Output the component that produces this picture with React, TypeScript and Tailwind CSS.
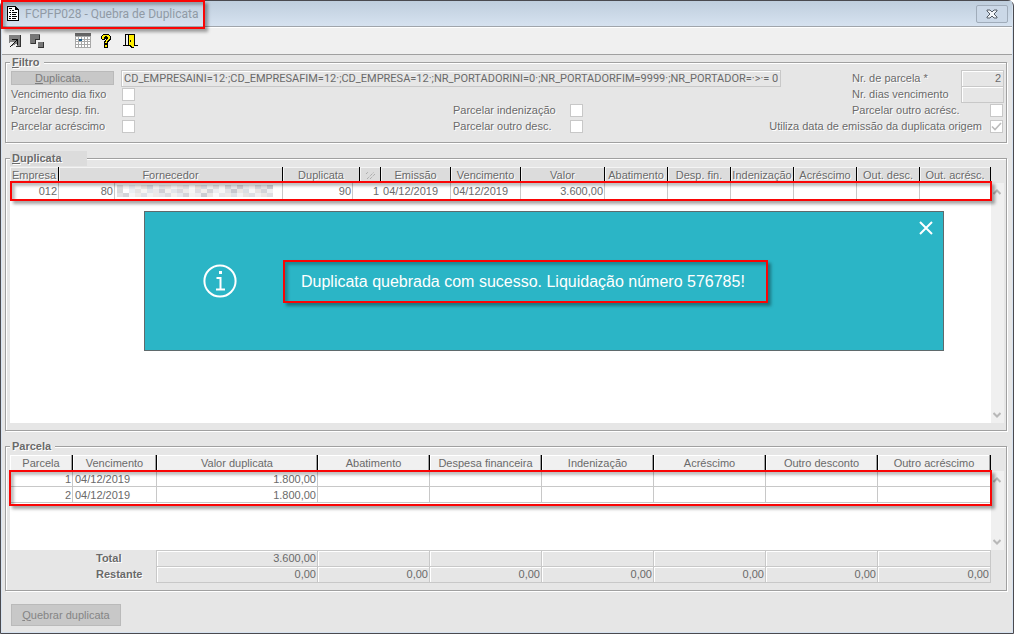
import React from 'react';

const INVOICE_COLS = [
  { label: 'Empresa', span: 1 },
  { label: 'Fornecedor', span: 2 },
  { label: 'Duplicata', span: 2 },
  { label: '', span: 1 },
  { label: 'Emissão', span: 1 },
  { label: 'Vencimento', span: 1 },
  { label: 'Valor', span: 1 },
  { label: 'Abatimento', span: 1 },
  { label: 'Desp. fin.', span: 1 },
  { label: 'Indenização', span: 1 },
  { label: 'Acréscimo', span: 1 },
  { label: 'Out. desc.', span: 1 },
  { label: 'Out. acrésc.', span: 1 },
];

const PARCEL_COLS = [
  'Parcela',
  'Vencimento',
  'Valor duplicata',
  'Abatimento',
  'Despesa financeira',
  'Indenização',
  'Acréscimo',
  'Outro desconto',
  'Outro acréscimo',
];

const PARCELS = [
  { number: 1, due: '04/12/2019', value: '1.800,00' },
  { number: 2, due: '04/12/2019', value: '1.800,00' },
];

const TOTALS = [
  { label: 'Total', values: ['3.600,00', '', '', '', '', '', ''] },
  { label: 'Restante', values: ['0,00', '0,00', '0,00', '0,00', '0,00', '0,00', '0,00'] },
];

// Grey mosaic that hides the supplier name
const MOSAIC = [
  ['#d4d4d6', '#f4f4f4', '#dfe3ea', '#f1efee', '#e2dedd', '#c9ced6', '#efefef', '#dcdde2', '#e6e1df', '#f2f2f4', '#e9e4e6', '#d9dadf', '#fafafa', '#e4dad8', '#cfd3db', '#eeeeee', '#dad7da', '#f5f5f5', '#cbcbd0', '#e5e5ea', '#c3c0c6', '#e0e4e8', '#efebea', '#cccdd3', '#dfdfe2', '#bfc0c6'],
  ['#cfd0d2', '#ffffff', '#e6eaf0', '#dedcdb', '#f4f2f0', '#d9dee4', '#e4e3e6', '#c5c4cb', '#efecea', '#dcdfe6', '#d0ced4', '#eae7e6', '#f4f4f4', '#d6d4da', '#f0ece8', '#c7c7cd', '#e9eaee', '#f4f4f4', '#dcdce0', '#b9bac2', '#e4e0de', '#d2d6dd', '#f6f6f6', '#e3dedd', '#c9cad0', '#ececee'],
  ['#dcdcde', '#c9cacf', '#f3f3f5', '#e9e5e3', '#d6d9e0', '#efeff0', '#e9e4e3', '#e0e1e6', '#d3d3d8', '#f1eeec', '#e1e3e9', '#cbcad0', '#f0f0f0', '#e9e9ec', '#bfc1c8', '#e6e2e0', '#f8f8f8', '#e2e2e5', '#e9e5e3', '#d7dae0', '#f0f0f2', '#e0dddc', '#d5d8de', '#ededee', '#e6e1df', '#d7d7db'],
];

const Highlight: React.FC<{ className: string }> = ({ className }) => (
  <div
    className={`pointer-events-none absolute z-10 border-2 border-[#fa0505] shadow-[3px_3px_3px_rgba(0,0,0,0.35),inset_3px_3px_3px_rgba(0,0,0,0.25)] ${className}`}
  />
);

interface GroupProps {
  title: React.ReactNode;
  legendClass?: string;
  children: React.ReactNode;
}

const Group: React.FC<GroupProps> = ({ title, legendClass = 'bg-[#e6e6e6] pr-1', children }) => (
  <fieldset className="min-w-0 border border-[#a0a0a0] pb-[7px] pl-1 pr-[2px] shadow-[1px_1px_0_#fff,inset_1px_1px_0_#fff]">
    <legend className={`h-[15px] pl-[2px] text-[11px] leading-[15px] font-bold [text-shadow:1px_1px_0_#fff] ${legendClass}`}>
      {title}
    </legend>
    {children}
  </fieldset>
);

const CheckBox: React.FC<{ id: string; checked?: boolean }> = ({ id, checked = false }) => (
  <span className="grid size-[13px] shrink-0">
    <input
      id={id}
      type="checkbox"
      defaultChecked={checked}
      disabled
      className="col-start-1 row-start-1 size-[13px] appearance-none border border-[#c8c8c8] bg-white"
    />
    {checked && (
      <svg viewBox="0 0 13 13" className="pointer-events-none col-start-1 row-start-1 size-[13px]" fill="none" stroke="#bcbcbc" strokeWidth="1.6">
        <path d="M2 6.5 5 9.5 11 3" />
      </svg>
    )}
  </span>
);

const ScrollBar: React.FC = () => (
  <div className="mt-4 flex w-[13px] shrink-0 flex-col justify-between bg-[#f0f0f0] pt-[5px] pr-[2px] pb-1">
    <button disabled aria-label="Rolar para cima" className="flex h-2 justify-center">
      <svg viewBox="0 0 8 8" className="size-2" fill="none" stroke="#b8b8b8" strokeWidth="2">
        <path d="M.5 6 4 2.5 7.5 6" />
      </svg>
    </button>
    <button disabled aria-label="Rolar para baixo" className="flex h-2 justify-center">
      <svg viewBox="0 0 8 8" className="size-2" fill="none" stroke="#b8b8b8" strokeWidth="2">
        <path d="M.5 2 4 5.5 7.5 2" />
      </svg>
    </button>
  </div>
);

const TitleBar: React.FC = () => (
  <header className="relative flex h-[26px] items-center border-b border-[#a0a5ab] bg-linear-to-b from-[#bfcedd] to-[#d6e2f0] pr-1 pl-[5px]">
    <svg viewBox="0 0 12 15" className="h-[15px] w-3" shapeRendering="crispEdges">
      <path d="M0 0h9v1h1v1h1v1h1v12H0z" fill="#000" />
      <path d="M1 1h7v3h3v10H1z" fill="#fff" />
      <path d="M2 2h3v1H2zM3 4h1v1H3zM5 4h2v1H5zM2 6h2v1H2zM5 6h5v1H5zM3 8h1v1H3zM5 8h4v1H5zM2 10h2v1H2zM5 10h5v1H5zM2 12h2v1H2zM5 12h4v1H5z" fill="#000" />
    </svg>
    <h1 className="ml-[6px] pt-px font-[Roboto,sans-serif] text-[12px] text-[#909aa5]">FCPFP028 - Quebra de Duplicata</h1>
    <button aria-label="Fechar janela" className="ml-auto flex h-[18px] w-8 items-center justify-center rounded-xs border border-[#a0acba] bg-[#cbd8e7]">
      <svg viewBox="0 0 12 10" className="h-[10px] w-3" fill="#f4f7fa" stroke="#555c66" strokeLinejoin="round">
        <path d="M1 1h3l2 2 2-2h3v1L8 5l3 3v1H8L6 7 4 9H1V8l3-3-3-3z" />
      </svg>
    </button>
    <Highlight className="-top-px -left-px h-[29px] w-[204px]" />
  </header>
);

const ToolBar: React.FC = () => (
  <nav className="flex h-7 items-center border-b border-[#a0a0a0] bg-[#f0f0f0] pl-[7px] shadow-[inset_0_1px_0_#fff]">
    <button aria-label="Restaurar" className="mr-[9px]">
      <svg viewBox="0 0 12 12" className="size-3" shapeRendering="crispEdges">
        <path d="M0 0h11v11H8V9H6v1H4v1H2V9H0z" fill="#808080" />
        <path d="M11 0h1v12h-1zM7 11h4v1H7z" fill="#333" />
        <path d="M1 7h4v1H4v1H3v1H0V8h1z" fill="#f0f0f0" />
        <path d="M3 4h6v6H8V6H7v1H6v1H5v1H4v1H3v1H2v1H1v-1h1v-1h1V9h1V8h1V7h1V6h1V5H3z" fill="#111" />
      </svg>
    </button>
    <button aria-label="Organizar" className="mr-[31px]">
      <svg viewBox="0 0 14 14" className="size-[14px]" shapeRendering="crispEdges">
        <path d="M0 0h10v6H6v4H0z" fill="#777" />
        <path d="M9 1h1v5H6v4H1V9h4V5h4z" fill="#333" />
        <path d="M8 8h6v6H8z" fill="#777" />
        <path d="M13 8h1v6H8v-1h5z" fill="#333" />
      </svg>
    </button>
    <button aria-label="Calendário" className="mr-[10px]">
      <svg viewBox="0 0 16 15" className="h-[15px] w-4" shapeRendering="crispEdges">
        <path d="M0 0h16v15H0z" fill="#a8a8a8" />
        <path d="M0 0h16v3H0z" fill="#666" />
        <path
          d="M1 4h2v2H1zM4 4h2v2H4zM7 4h2v2H7zM10 4h2v2h-2zM13 4h2v2h-2zM1 7h2v1H1zM7 7h2v1H7zM10 7h2v1h-2zM13 7h2v1h-2zM1 9h2v2H1zM4 9h2v2H4zM7 9h2v2H7zM10 9h2v2h-2zM13 9h2v2h-2zM1 12h2v2H1zM4 12h2v2H4zM7 12h2v2H7zM10 12h2v2h-2zM13 12h2v2h-2z"
          fill="#fff"
        />
        <path d="M4 6h3v2H4z" fill="#1d5f8f" />
      </svg>
    </button>
    <button aria-label="Ajuda" className="mr-3">
      <svg viewBox="0 0 10 14" className="h-[14px] w-[10px]" shapeRendering="crispEdges">
        <path d="M2 0h6v1h1v1h1v4H9v1H8v1H7v2H3V7h1V6h1V5H4v1H1V5H0V2h1V1h1zM3 10h4v4H3z" fill="#000" />
        <path d="M2 1h6v1h1v3H8v1H7v1H6v2H4V8h1V6h1V5h1V3H6V2H4v1H3v2H1V2h1zM4 11h2v2H4z" fill="#ffee00" />
      </svg>
    </button>
    <button aria-label="Sair">
      <svg viewBox="0 0 15 14" className="h-[14px] w-[15px]" shapeRendering="crispEdges">
        <path d="M2 0h10v11h3v1H0v-1h2z" fill="#000" />
        <path d="M3 1h2v10H3z" fill="#f0f0f0" />
        <path d="M5 1h1l5 1v12H9l-4-3z" fill="#000" />
        <path d="M6 1h5v12H9v-1H8v-1H6z" fill="#ffee00" />
        <path d="M7 6h1v2H7z" fill="#000" />
      </svg>
    </button>
  </nav>
);

const FilterGroup: React.FC = () => {
  const field = 'h-[17px] min-w-0 border border-[#c8c8c8] bg-[#e6e6e6] px-[2px] text-[11px] shadow-[inset_1px_1px_0_#fff]';

  return (
    <Group title={<><u>F</u>iltro</>}>
      <div className="flex flex-col pb-px pl-px [text-shadow:1px_1px_0_#fff]">
        <div className="flex h-4 items-center">
          <button disabled className="mr-[7px] h-[14px] w-[103px] shrink-0 border border-[#bababa] bg-[#c8c8c8] text-center leading-3 text-[#7c7c7c] [text-shadow:none]">
            <u>D</u>uplicata...
          </button>
          <input
            aria-label="Filtro de duplicata"
            readOnly
            value="CD_EMPRESAINI=12·;CD_EMPRESAFIM=12·;CD_EMPRESA=12·;NR_PORTADORINI=0·;NR_PORTADORFIM=9999·;NR_PORTADOR=·>·= 0"
            className={`flex-1 font-[Roboto,sans-serif] ${field}`}
          />
          <label htmlFor="parcelas" className="ml-[71px] w-[109px] shrink-0">Nr. de parcela *</label>
          <input id="parcelas" readOnly value="2" className={`w-[43px] text-right ${field}`} />
        </div>
        <div className="flex h-4 items-center">
          <label htmlFor="dia-fixo" className="w-[111px]">Vencimento dia fixo</label>
          <CheckBox id="dia-fixo" />
          <label htmlFor="dias" className="ml-auto w-[109px]">Nr. dias vencimento</label>
          <input id="dias" readOnly value="" className={`w-[43px] ${field}`} />
        </div>
        <div className="flex h-4 items-center pr-px">
          <label htmlFor="desp-fin" className="w-[111px]">Parcelar desp. fin.</label>
          <CheckBox id="desp-fin" />
          <label htmlFor="indenizacao" className="ml-[318px] w-[117px]">Parcelar indenização</label>
          <CheckBox id="indenizacao" />
          <label htmlFor="outro-acresc" className="ml-auto w-[138px]">Parcelar outro acrésc.</label>
          <CheckBox id="outro-acresc" />
        </div>
        <div className="flex h-4 items-center pr-px">
          <label htmlFor="acrescimo" className="w-[111px]">Parcelar acréscimo</label>
          <CheckBox id="acrescimo" />
          <label htmlFor="outro-desc" className="ml-[318px] w-[117px]">Parcelar outro desc.</label>
          <CheckBox id="outro-desc" />
          <label htmlFor="data-emissao" className="mr-2 ml-auto">Utiliza data de emissão da duplicata origem</label>
          <CheckBox id="data-emissao" checked />
        </div>
      </div>
    </Group>
  );
};

const SuccessMessage: React.FC = () => (
  <div role="alertdialog" aria-label="Mensagem" className="absolute top-11 right-[47px] left-[134px] flex h-[140px] items-center border border-[#5f6a6c] bg-[#2bb5c6] text-white">
    <svg viewBox="0 0 34 34" className="ml-[58px] size-[34px]" fill="none" stroke="#fff" strokeWidth="2">
      <circle cx="17" cy="17" r="15.6" />
      <path d="M13.5 14h4v11M13 25.5h9" />
      <path d="M16 8.5h3" strokeWidth="3" />
    </svg>
    <div className="relative ml-[46px] flex h-[43px] w-[485px] items-center pl-[18px]">
      <p className="text-[16px] whitespace-nowrap">Duplicata quebrada com sucesso. Liquidação número 576785!</p>
      <Highlight className="inset-0" />
    </div>
    <button aria-label="Fechar" className="absolute top-[9px] right-[10px]">
      <svg viewBox="0 0 14 14" className="size-[14px]" stroke="#fff" strokeWidth="2">
        <path d="m1 1 12 12M13 1 1 13" />
      </svg>
    </button>
  </div>
);

const InvoiceGroup: React.FC = () => {
  const td = 'overflow-hidden border-r border-[#c8c8c8] pr-px pl-[2px]';

  return (
    <Group title={<><u>D</u>uplicata</>} legendClass="w-[77px] bg-[#dcdcdc]">
      <div className="flex pt-px">
        <div className="relative min-h-[256px] min-w-0 flex-1 bg-white">
          <table className="w-full table-fixed border-separate border-spacing-0 whitespace-nowrap">
            <colgroup>
              <col className="w-[49px]" />
              <col className="w-[56px]" />
              <col className="w-[168px]" />
              <col className="w-[70px]" />
              <col className="w-[7px]" />
              <col className="w-[21px]" />
              <col className="w-[70px]" />
              <col className="w-[70px]" />
              <col className="w-[84px]" />
              <col className="w-[63px]" />
              <col className="w-[63px]" />
              <col className="w-[63px]" />
              <col className="w-[63px]" />
              <col className="w-[63px]" />
              <col className="w-[71px]" />
            </colgroup>
            <thead>
              <tr className="h-4">
                {INVOICE_COLS.map((col, i) => (
                  <th
                    key={i}
                    colSpan={col.span}
                    className="overflow-hidden border-r border-black bg-[#dcdcdc] p-0 font-normal shadow-[inset_1px_1px_0_#f4f4f4] [text-shadow:1px_1px_0_#fff]"
                  >
                    {col.label || (
                      <svg viewBox="0 0 10 8" className="mx-auto h-2 w-[10px]" stroke="#999" strokeDasharray="1 1">
                        <path d="M2 8 9 1M5 8l5-5M1 3l2-2" />
                      </svg>
                    )}
                  </th>
                ))}
              </tr>
            </thead>
            <tbody>
              <tr className="h-4">
                <td className={`text-right ${td}`}>012</td>
                <td className={`text-right ${td}`}>80</td>
                <td className={td}>
                  <svg viewBox="0 0 26 3" preserveAspectRatio="none" className="h-3 w-[156px] opacity-80" shapeRendering="crispEdges" aria-label="Fornecedor oculto">
                    {MOSAIC.map((row, y) => row.map((fill, x) => <rect key={`${x}-${y}`} x={x} y={y} width="1" height="1" fill={fill} />))}
                  </svg>
                </td>
                <td className={`text-right ${td}`}>90</td>
                <td colSpan={2} className="pr-[2px] text-right">1</td>
                <td className={td}>04/12/2019</td>
                <td className={td}>04/12/2019</td>
                <td className={`text-right ${td}`}>3.600,00</td>
                <td className={td} />
                <td className={td} />
                <td className={td} />
                <td className={td} />
                <td className={td} />
                <td className={td} />
              </tr>
            </tbody>
          </table>
          <Highlight className="top-[14px] -right-px left-0 h-5" />
          <SuccessMessage />
        </div>
        <ScrollBar />
      </div>
    </Group>
  );
};

const ParcelColumns: React.FC = () => (
  <colgroup>
    <col className="w-[63px]" />
    <col className="w-[84px]" />
    <col className="w-[161px]" />
    <col className="w-[112px]" />
    <col className="w-[112px]" />
    <col className="w-[112px]" />
    <col className="w-[112px]" />
    <col className="w-[112px]" />
    <col className="w-[113px]" />
  </colgroup>
);

const ParcelGroup: React.FC = () => {
  const td = 'overflow-hidden border-r border-b border-[#c8c8c8] pt-px pr-px pb-0 pl-[2px] leading-[14px]';

  return (
    <Group title="Parcela">
      <div className="flex pt-px">
        <div className="relative min-h-[95px] min-w-0 flex-1 bg-white">
          <table className="w-full table-fixed border-separate border-spacing-0 whitespace-nowrap">
            <ParcelColumns />
            <thead>
              <tr className="h-4">
                {PARCEL_COLS.map((label) => (
                  <th key={label} className="border-r border-black bg-[#f0f0f0] p-0 font-normal shadow-[inset_-1px_-1px_0_#a0a0a0,inset_1px_1px_0_#fff]">
                    {label}
                  </th>
                ))}
              </tr>
            </thead>
            <tbody>
              {PARCELS.map((parcel) => (
                <tr key={parcel.number} className="h-4">
                  <td className={`text-right ${td}`}>{parcel.number}</td>
                  <td className={td}>{parcel.due}</td>
                  <td className={`text-right ${td}`}>{parcel.value}</td>
                  {PARCEL_COLS.slice(3).map((label) => (
                    <td key={label} className={td} />
                  ))}
                </tr>
              ))}
            </tbody>
          </table>
          <Highlight className="top-[15px] -right-px -left-px h-9" />
        </div>
        <ScrollBar />
      </div>

      {/* Totals */}
      <div className="pr-[13px]">
        <table className="w-full table-fixed border-separate border-spacing-0">
          <ParcelColumns />
          <tbody>
            {TOTALS.map((total) => (
              <tr key={total.label} className="group h-4">
                <th colSpan={2} scope="row" className="border-r border-[#c8c8c8] p-0 pl-[86px] text-left font-bold [text-shadow:1px_1px_0_#fff]">
                  {total.label}
                </th>
                {total.values.map((value, i) => (
                  <td key={i} className="border-t border-r border-[#c8c8c8] p-0 shadow-[inset_1px_1px_0_#fff] group-last:border-b">
                    <input
                      readOnly
                      aria-label={`${total.label} ${PARCEL_COLS[i + 2]}`}
                      value={value}
                      className="block h-[15px] w-full bg-transparent px-px text-right text-[11px]"
                    />
                  </td>
                ))}
              </tr>
            ))}
          </tbody>
        </table>
      </div>
    </Group>
  );
};

const App: React.FC = () => (
  <div className="min-h-screen bg-white pr-[2px] font-['Liberation_Sans',Arial,sans-serif] text-[11px] leading-[15px] text-[#6a6a6a]">
    <div className="flex min-h-screen flex-col rounded-t-md border border-[#4a4a4f] bg-[#d6e2f0] px-px pb-px">
      <TitleBar />
      <ToolBar />
      <main className="flex flex-1 flex-col gap-2 bg-[#e6e6e6] pr-[5px] pl-[3px]">
        <FilterGroup />
        <InvoiceGroup />
        <ParcelGroup />
        <button disabled className="mt-[5px] ml-[6px] h-[22px] w-[110px] border border-[#bababa] bg-[#c8c8c8] text-[#858585]">
          <u>Q</u>uebrar duplicata
        </button>
      </main>
    </div>
  </div>
);

export default App;
